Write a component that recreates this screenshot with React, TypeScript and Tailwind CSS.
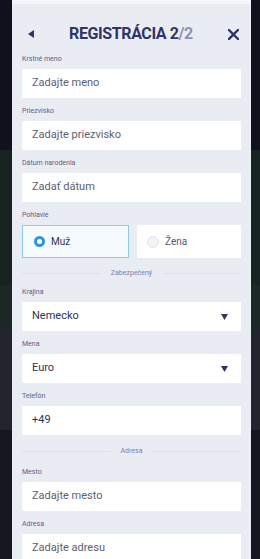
import React from 'react';

const font = { fontFamily: 'Roboto, "Liberation Sans", sans-serif' };

interface FieldProps {
  label: string;
  value: string;
  select?: boolean;
  dark?: boolean;
}

const Field: React.FC<FieldProps> = ({ label, value, select, dark }) => (
  <div className="mb-[8px]">
    <div className="h-[10px] mb-[5px] text-[7px] leading-[10px] text-[#5b6088]">{label}</div>
    <div className="h-[29px] bg-white flex items-center justify-between pl-[10px] pr-[13px]">
      <span className={`text-[11px] ${dark ? 'text-[#2f334f]' : 'text-[#5a5e72]'}`}>{value}</span>
      {select && (
        <svg width="7" height="6" viewBox="0 0 7 6">
          <path d="M0 0h7L3.5 6z" fill="#2e3566" />
        </svg>
      )}
    </div>
  </div>
);

const Divider: React.FC<{ label: string }> = ({ label }) => (
  <div className="flex items-center gap-[10px] h-[16px]">
    <div className="flex-1 h-px bg-[#dcdfec]" />
    <span className="text-[7px] text-[#7b80a8]">{label}</span>
    <div className="flex-1 h-px bg-[#dcdfec]" />
  </div>
);

export default function App() {
  return (
    <div className="relative w-[260px] h-[559px] overflow-hidden bg-[#121320]" style={font}>
      {/* page behind the modal */}
      <div className="flex flex-col h-full">
        <div className="h-[150px] bg-[#10111d]" />
        <div className="h-[135px] bg-[#172421]" />
        <div className="h-[45px] bg-[#1b2826]" />
        <div className="h-[100px] bg-[#23242e]" />
        <div className="flex-1 bg-[#15161f]" />
      </div>

      {/* modal */}
      <div className="absolute left-[12px] top-0 w-[239px] h-full overflow-hidden bg-[#eaecf4] flex flex-col">
        <div className="h-[4px] shrink-0 bg-[#f5f6fa]" />
        <div className="flex shrink-0 items-center justify-between h-[50px] pl-[16px] pr-[12px] pt-[10px]">
          <svg width="6" height="8" viewBox="0 0 6 8">
            <path d="M6 0v8L0 4z" fill="#2e3566" />
          </svg>
          <div className="text-[16px] font-bold text-[#2e3566] tracking-tight">
            REGISTRÁCIA 2<span className="text-[#8d92b3]">/2</span>
          </div>
          <svg width="11" height="11" viewBox="0 0 11 11">
            <path d="M1 1l9 9M10 1l-9 9" stroke="#2e3566" strokeWidth="2.4" strokeLinecap="square" />
          </svg>
        </div>

        <div className="shrink-0 px-[10px]">
          <Field label="Krstné meno" value="Zadajte meno" />
          <Field label="Priezvisko" value="Zadajte priezvisko" />
          <Field label="Dátum narodenia" value="Zadať dátum" />

          <div className="h-[10px] mb-[5px] text-[7px] leading-[10px] text-[#5b6088]">Pohlavie</div>
          <div className="flex gap-[8px] mb-[7px]">
            <div className="flex-1 h-[33px] bg-[#f5fbfd] border border-[#8ccbe6] flex items-center pl-[11px] gap-[6px]">
              <span className="w-[11px] h-[11px] rounded-full border-[3px] border-[#2a98d6] bg-white" />
              <span className="text-[10px] text-[#2f334f]">Muž</span>
            </div>
            <div className="flex-1 h-[33px] bg-white flex items-center pl-[10px] gap-[6px]">
              <span className="w-[12px] h-[12px] rounded-full border border-[#e3e4ec] bg-[#f3f3f6]" />
              <span className="text-[10px] text-[#55596f]">Žena</span>
            </div>
          </div>

          <Divider label="Zabezpečený" />
          <div className="h-[6px]" />

          <Field label="Krajina" value="Nemecko" select dark />
          <Field label="Mena" value="Euro" select dark />
          <Field label="Telefón" value="+49" dark />

          <Divider label="Adresa" />
          <div className="h-[8px]" />

          <Field label="Mesto" value="Zadajte mesto" />
          <Field label="Adresa" value="Zadajte adresu" />
        </div>
      </div>
    </div>
  );
}
